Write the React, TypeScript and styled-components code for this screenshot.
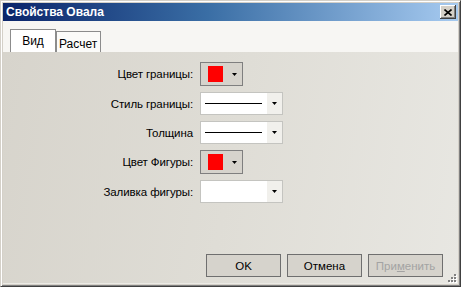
import React from 'react'
import styled, { createGlobalStyle } from 'styled-components'

const GlobalStyle = createGlobalStyle`
  html, body {
    margin: 0;
    padding: 0;
    background: #d4d0c8;
  }
`

const Window = styled.div`
  position: relative;
  width: 461px;
  height: 287px;
  box-sizing: border-box;
  display: flex;
  flex-direction: column;
  background: #d4d0c8;
  border-top: 1px solid #d4d0c8;
  border-left: 1px solid #d4d0c8;
  border-right: 1px solid #404040;
  border-bottom: 1px solid #404040;
  box-shadow: inset 1px 1px 0 #ffffff, inset -1px -1px 0 #808080;
  padding: 2px;
  font-family: 'Liberation Sans', Arial, sans-serif;
`

const TitleBar = styled.div`
  height: 18px;
  flex: none;
  display: flex;
  align-items: center;
  justify-content: space-between;
  padding: 0 2px 0 3px;
  background: linear-gradient(to right, #0a246a, #3a6ea5 45%, #a6caf0);
`

const Title = styled.span`
  color: #fff;
  font-weight: bold;
  font-size: 12px;
`

const CloseButton = styled.button`
  width: 16px;
  height: 14px;
  padding: 0;
  display: flex;
  align-items: center;
  justify-content: center;
  background: #d4d0c8;
  border: none;
  box-shadow: inset -1px -1px 0 #404040, inset 1px 1px 0 #ffffff,
    inset -2px -2px 0 #808080;
`

const TabStrip = styled.div`
  height: 31px;
  flex: none;
  box-sizing: border-box;
  display: flex;
  align-items: flex-end;
  padding-left: 7px;
  background: #f7f6f3;
`

const Tab = styled.div<{ $active?: boolean }>`
  box-sizing: border-box;
  height: ${p => (p.$active ? 23 : 21)}px;
  width: ${p => (p.$active ? 46 : 45)}px;
  border: 1px solid #8c8c8c;
  border-bottom: none;
  background: ${p => (p.$active ? '#ffffff' : '#fbfbf9')};
  font-size: 12px;
  color: #000;
  display: flex;
  align-items: center;
  padding-top: ${p => (p.$active ? 0 : 3)}px;
  padding-left: ${p => (p.$active ? 0 : 2)}px;
  justify-content: ${p => (p.$active ? 'center' : 'flex-start')};
`

const Body = styled.div`
  flex: 1;
  display: flex;
  flex-direction: column;
  background: linear-gradient(100deg, #d7d4cc 0%, #dfddd6 50%, #e8e7e2 100%);
  border-bottom: 1px solid #ecebe6;
`

const Form = styled.div`
  display: grid;
  grid-template-columns: 190px max-content;
  column-gap: 7px;
  row-gap: 6px;
  align-items: center;
  padding-top: 10px;
`

const Label = styled.span`
  font-size: 11.5px;
  letter-spacing: -0.1px;
  color: #000;
  text-align: right;
  white-space: nowrap;
`

const ColorButton = styled.div`
  box-sizing: border-box;
  width: 43px;
  height: 24px;
  border: 1px solid #7f7f7f;
  background: #d6d3cc;
  display: flex;
  align-items: center;
  padding-left: 7px;
  gap: 9px;
`

const Swatch = styled.div<{ $color: string }>`
  width: 15px;
  height: 16px;
  background: ${p => p.$color};
`

const Combo = styled.div`
  box-sizing: border-box;
  width: 83px;
  height: 23px;
  border: 1px solid #c4c4c0;
  background: #fff;
  display: flex;
  align-items: stretch;
`

const ComboValue = styled.div`
  flex: 1;
  display: flex;
  align-items: center;
  padding-left: 4px;
`

const LineSample = styled.div`
  width: 57px;
  height: 1px;
  background: #000;
`

const ComboArrow = styled.div`
  width: 15px;
  background: #f1f0ec;
  display: flex;
  align-items: center;
  justify-content: center;
`

const Footer = styled.div`
  margin-top: auto;
  display: flex;
  justify-content: flex-end;
  gap: 6px;
  padding: 0 15px 6px 0;
`

const Button = styled.button<{ $disabled?: boolean }>`
  box-sizing: border-box;
  width: 75px;
  height: 23px;
  border: 1px solid #6f6f6f;
  background: #d6d3cc;
  font-family: 'Liberation Sans', Arial, sans-serif;
  font-size: 11.5px;
  color: ${p => (p.$disabled ? '#a3a3a3' : '#000')};
  padding: 0;
`

const Grip = styled.svg`
  position: absolute;
  right: 2px;
  bottom: 2px;
`

const Arrow = () => (
  <svg width="5" height="3" viewBox="0 0 5 3">
    <path d="M0 0h5L2.5 3z" fill="#000" />
  </svg>
)

const LineCombo = () => (
  <Combo>
    <ComboValue>
      <LineSample />
    </ComboValue>
    <ComboArrow>
      <Arrow />
    </ComboArrow>
  </Combo>
)

const ColorPicker = ({ color }: { color: string }) => (
  <ColorButton>
    <Swatch $color={color} />
    <Arrow />
  </ColorButton>
)

const gripDots = [
  [9, 1], [6, 4], [9, 4], [3, 7], [6, 7], [9, 7],
]

const App: React.FC = () => {
  return (
    <>
      <GlobalStyle />
      <Window>
        <TitleBar>
          <Title>Свойства Овала</Title>
          <CloseButton>
            <svg width="8" height="7" viewBox="0 0 8 7">
              <path d="M0.5 0.5L7.5 6.5M7.5 0.5L0.5 6.5" stroke="#000" strokeWidth="1.6" />
            </svg>
          </CloseButton>
        </TitleBar>

        <TabStrip>
          <Tab $active>Вид</Tab>
          <Tab>Расчет</Tab>
        </TabStrip>

        <Body>
          <Form>
            <Label>Цвет границы:</Label>
            <ColorPicker color="#ff0000" />

            <Label>Стиль границы:</Label>
            <LineCombo />

            <Label>Толщина</Label>
            <LineCombo />

            <Label>Цвет Фигуры:</Label>
            <ColorPicker color="#ff0000" />

            <Label>Заливка фигуры:</Label>
            <Combo>
              <ComboValue />
              <ComboArrow>
                <Arrow />
              </ComboArrow>
            </Combo>
          </Form>

          <Footer>
            <Button>OK</Button>
            <Button>Отмена</Button>
            <Button $disabled>
              При<u>м</u>енить
            </Button>
          </Footer>
        </Body>

        <Grip width="12" height="12" viewBox="0 0 12 12">
          {gripDots.map(([x, y]) => (
            <g key={`${x}-${y}`}>
              <rect x={x} y={y + 2} width="2" height="2" fill="#ffffff" />
              <rect x={x - 1} y={y + 1} width="2" height="2" fill="#808080" />
            </g>
          ))}
        </Grip>
      </Window>
    </>
  )
}

export default App
